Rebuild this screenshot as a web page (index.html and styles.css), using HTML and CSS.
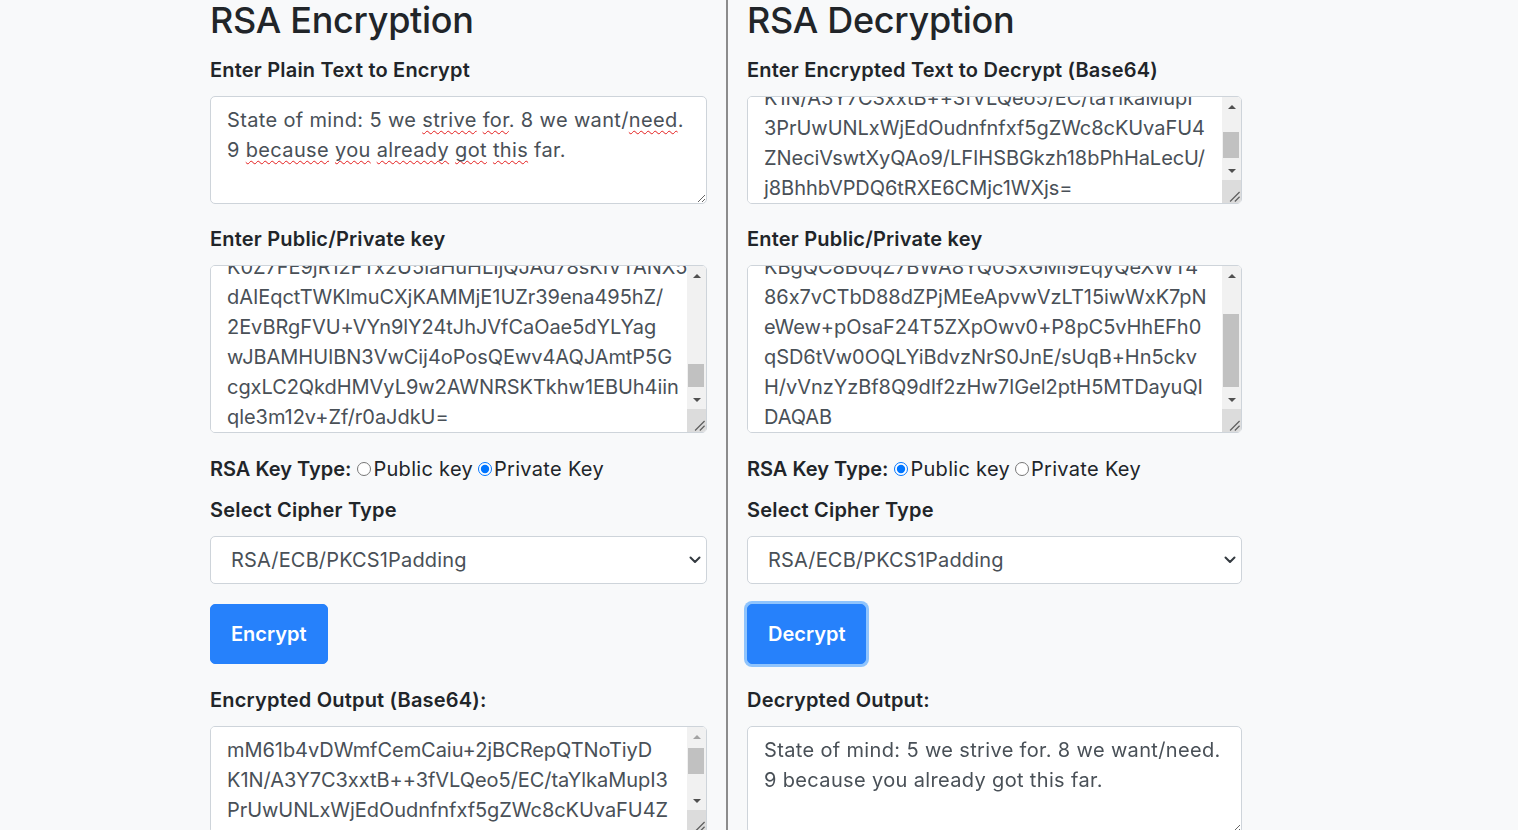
FILE: index.html
```html
<!DOCTYPE html>
<html lang="en">
<head>
<meta charset="utf-8">
<title>RSA Encryption / Decryption</title>
<link rel="stylesheet" href="styles.css">
</head>
<body>
<main class="page">
  <section class="panel panel-left">
    <h1 class="title">RSA Encryption</h1>
    <label class="label">Enter Plain Text to Encrypt</label>
    <div class="ta-wrap">
      <div class="field rows3 fake-ta text" role="textbox" contenteditable="true" spellcheck="false">State of mind: 5 we <span class="sp">strive</span> <span class="sp">for</span>. 8 we want/<span class="sp">need</span>.<br>9 <span class="sp">because</span> <span class="sp">you</span> <span class="sp">already</span> <span class="sp">got</span> <span class="sp">this</span> far.</div>
    </div>

    <label class="label">Enter Public/Private key</label>
    <div class="ta-wrap wrap5">
      <textarea class="field rows5 code" wrap="off" spellcheck="false" data-scroll="bottom">MIICdwIBADANBgkqhkiG9w0BAQEFAASCAmEw
ggJdAgEAAoGBALwHSpnsFYDxhDRLEYwj0SrJ
B5dZPjzrHu8JNsPzx1k+MwR4Cm/BXMtPXmLB
bErqU3lrB7T6k6FobhPlllek7C/T4/KQuW8e
EQWHSpIPq1XDQ5C2IgXb8zatLQmcT+xSoH4f
nlyS/71WfNjMF/xD10h/bMfDsgZ6XZq0fkxM
NrK7kCMBAAECgYAh8n3a7ZHtSAlWdSQ/bH5q
Lr2cVvT0pXz8MkqU4eWn1sYgH3fJ6dA9bCoE
tZ7xRmN2yKpQ5vLw8aFhG3jD1sU0eIcB4nXo
OqV6rTgY9zMkP2bWf7hLd+A3sNcJ5xEuH8iR
QJBAOg7sV2mK9dLx4fP1nTq6ZcYwR3hB5uJe
G8kA0vNyS7pWzX2tDfC4lMqH9bUo1iEjRgK5
xLf3bM8aQnT6yWc1vZpH2sJd7gKuR0oE4tYi
P9mVwB5lNc3qXz8fAeGh1rSj6kUo2DyT7Ib0
CQJBAM/s4nR8yLk2XqWv9hBt1dZgE3oP6fJc
a7VuT0mN5iKe+Qx2wYl8HrDsG4pCb1zFjS9O
h3nLqA6vBtY0cWkM2xRdE7fU8iPsJ4gZo5Ka
DlT9wQe1rXbH6mVc3yN8pS0uGzA2jKi7F4Ls
K0Z7FE9jR12FTx2U5IaHuHLIjQJAd78sKIVTANX5
dAIEqctTWKlmuCXjKAMMjE1UZr39ena495hZ/
2EvBRgFVU+VYn9lY24tJhJVfCaOae5dYLYag
wJBAMHUIBN3VwCij4oPosQEwv4AQJAmtP5G
cgxLC2QkdHMVyL9w2AWNRSKTkhw1EBUh4iin
qle3m12v+Zf/r0aJdkU=</textarea>
      <div class="sbar" aria-hidden="true">
        <div class="sb-btn sb-up"><svg width="8" height="4" viewBox="0 0 8 4"><path d="M0 4 L4 0 L8 4 Z"/></svg></div>
        <div class="sb-track"><div class="sb-thumb"></div></div>
        <div class="sb-btn sb-down"><svg width="8" height="4" viewBox="0 0 8 4"><path d="M0 0 L8 0 L4 4 Z"/></svg></div>
        <div class="sb-corner"><svg width="20" height="20" viewBox="0 0 20 20"><path d="M8.5 19 L18.5 9 M13.5 19 L18.5 14"/></svg></div>
      </div>
    </div>

    <div class="keytype">
      <strong>RSA Key Type:</strong><input type="radio" name="enc-key" id="enc-pub"><label for="enc-pub">Public key</label><input type="radio" name="enc-key" id="enc-priv" checked><label for="enc-priv">Private Key</label>
    </div>

    <label class="label">Select Cipher Type</label>
    <div class="select-wrap">
      <select class="select">
        <option>RSA/ECB/PKCS1Padding</option>
        <option>RSA/ECB/OAEPWithSHA-1AndMGF1Padding</option>
        <option>RSA/ECB/OAEPWithSHA-256AndMGF1Padding</option>
      </select>
      <svg class="chevron" width="12" height="8" viewBox="0 0 12 8" aria-hidden="true"><path d="M1.5 1.5 L6 6 L10.5 1.5" fill="none" stroke="#343a40" stroke-width="2" stroke-linecap="round" stroke-linejoin="round"/></svg>
    </div>

    <button class="btn" type="button">Encrypt</button>

    <label class="label">Encrypted Output (Base64):</label>
    <div class="ta-wrap">
      <textarea class="field rows3 code" wrap="off" spellcheck="false">mM61b4vDWmfCemCaiu+2jBCRepQTNoTiyD
K1N/A3Y7C3xxtB++3fVLQeo5/EC/taYlkaMupI3
PrUwUNLxWjEdOudnfnfxf5gZWc8cKUvaFU4Z
NeciVswtXyQAo9/LFIHSBGkzh18bPhHaLecU/j8
BhhbVPDQ6tRXE6CMjc1WXjs=</textarea>
      <div class="sbar" aria-hidden="true">
        <div class="sb-btn sb-up"><svg width="8" height="4" viewBox="0 0 8 4"><path d="M0 4 L4 0 L8 4 Z"/></svg></div>
        <div class="sb-track"><div class="sb-thumb"></div></div>
        <div class="sb-btn sb-down"><svg width="8" height="4" viewBox="0 0 8 4"><path d="M0 0 L8 0 L4 4 Z"/></svg></div>
        <div class="sb-corner"><svg width="20" height="20" viewBox="0 0 20 20"><path d="M8.5 19 L18.5 9 M13.5 19 L18.5 14"/></svg></div>
      </div>
    </div>
  </section>

  <section class="panel panel-right">
    <h1 class="title">RSA Decryption</h1>
    <label class="label">Enter Encrypted Text to Decrypt (Base64)</label>
    <div class="ta-wrap">
      <textarea class="field rows3 code" wrap="off" spellcheck="false" data-scroll="bottom">mM61b4vDWmfCemCaiu+2jBCRepQTNoTiyD
K1N/A3Y7C3xxtB++3fVLQeo5/EC/taYlkaMupI
3PrUwUNLxWjEdOudnfnfxf5gZWc8cKUvaFU4
ZNeciVswtXyQAo9/LFIHSBGkzh18bPhHaLecU/
j8BhhbVPDQ6tRXE6CMjc1WXjs=</textarea>
      <div class="sbar" aria-hidden="true">
        <div class="sb-btn sb-up"><svg width="8" height="4" viewBox="0 0 8 4"><path d="M0 4 L4 0 L8 4 Z"/></svg></div>
        <div class="sb-track"><div class="sb-thumb"></div></div>
        <div class="sb-btn sb-down"><svg width="8" height="4" viewBox="0 0 8 4"><path d="M0 0 L8 0 L4 4 Z"/></svg></div>
        <div class="sb-corner"><svg width="20" height="20" viewBox="0 0 20 20"><path d="M8.5 19 L18.5 9 M13.5 19 L18.5 14"/></svg></div>
      </div>
    </div>

    <label class="label">Enter Public/Private key</label>
    <div class="ta-wrap wrap5">
      <textarea class="field rows5 code" wrap="off" spellcheck="false" data-scroll="bottom">MIGfMA0GCSqGSIb3DQEBAQUAA4GNADCBiQ
KBgQC8B0qZ7BWA8YQ0SxGMI9EqyQeXWT4
86x7vCTbD88dZPjMEeApvwVzLT15iwWxK7pN
eWew+pOsaF24T5ZXpOwv0+P8pC5vHhEFh0
qSD6tVw0OQLYiBdvzNrS0JnE/sUqB+Hn5ckv
H/vVnzYzBf8Q9dIf2zHw7IGel2ptH5MTDayuQI
DAQAB</textarea>
      <div class="sbar" aria-hidden="true">
        <div class="sb-btn sb-up"><svg width="8" height="4" viewBox="0 0 8 4"><path d="M0 4 L4 0 L8 4 Z"/></svg></div>
        <div class="sb-track"><div class="sb-thumb"></div></div>
        <div class="sb-btn sb-down"><svg width="8" height="4" viewBox="0 0 8 4"><path d="M0 0 L8 0 L4 4 Z"/></svg></div>
        <div class="sb-corner"><svg width="20" height="20" viewBox="0 0 20 20"><path d="M8.5 19 L18.5 9 M13.5 19 L18.5 14"/></svg></div>
      </div>
    </div>

    <div class="keytype">
      <strong>RSA Key Type:</strong><input type="radio" name="dec-key" id="dec-pub" checked><label for="dec-pub">Public key</label><input type="radio" name="dec-key" id="dec-priv"><label for="dec-priv">Private Key</label>
    </div>

    <label class="label">Select Cipher Type</label>
    <div class="select-wrap">
      <select class="select">
        <option>RSA/ECB/PKCS1Padding</option>
        <option>RSA/ECB/OAEPWithSHA-1AndMGF1Padding</option>
        <option>RSA/ECB/OAEPWithSHA-256AndMGF1Padding</option>
      </select>
      <svg class="chevron" width="12" height="8" viewBox="0 0 12 8" aria-hidden="true"><path d="M1.5 1.5 L6 6 L10.5 1.5" fill="none" stroke="#343a40" stroke-width="2" stroke-linecap="round" stroke-linejoin="round"/></svg>
    </div>

    <button class="btn btn-focus" type="button">Decrypt</button>

    <label class="label">Decrypted Output:</label>
    <div class="ta-wrap">
      <textarea class="field rows3 text" wrap="off" spellcheck="false">State of mind: 5 we strive for. 8 we want/need.
9 because you already got this far.</textarea>
    </div>
  </section>
</main>
<script src="script.js"></script>
</body>
</html>
```

FILE: styles.css
```css
* {
  box-sizing: border-box;
}

html,
body {
  margin: 0;
  height: 100%;
}

body {
  background: #f8f9fa;
  color: #212529;
  font-family: Inter, "Noto Sans", sans-serif;
  overflow: hidden;
}

.page {
  display: flex;
  align-items: stretch;
  min-height: 100vh;
  padding-left: 210px;
}

.panel {
  display: flex;
  flex-direction: column;
  align-items: flex-start;
}

.panel-left {
  width: 518px;
  padding-right: 19px;
  border-right: 2px solid #8c8c8c;
}

.panel-right {
  width: 495px;
  margin-left: 19px;
}

.title {
  margin: 0 0 15px;
  font-size: 36px;
  font-weight: 500;
  line-height: 40px;
  letter-spacing: -0.3px;
}

.label {
  display: block;
  margin: 0 0 11px;
  font-size: 20px;
  font-weight: 600;
  line-height: 30px;
  letter-spacing: 0.2px;
}

/* ---------- text areas ---------- */

.ta-wrap {
  position: relative;
  width: 100%;
  flex: none;
  margin: 0 0 20px;
}

.ta-wrap.wrap5 {
  margin-bottom: 21px;
}

.field {
  display: block;
  width: 100%;
  margin: 0;
  padding: 8px 16px;
  font-family: inherit;
  font-size: 20px;
  line-height: 30px;
  color: #495057;
  background: #fff;
  border: 1px solid #ced4da;
  border-radius: 5px;
  resize: vertical;
  overflow-x: hidden;
  overflow-y: auto;
  white-space: pre;
  outline: none;
}

.field.text {
  letter-spacing: 0.35px;
}

.field.code {
  letter-spacing: -0.05px;
  padding-right: 36px;
}

.rows3 {
  height: 108px;
}

.rows5 {
  height: 168px;
}

.fake-ta {
  white-space: normal;
}

.sp {
  text-decoration: underline wavy #e41e1e;
  text-decoration-thickness: 1.4px;
  text-underline-offset: 3px;
  text-decoration-skip-ink: none;
}

/* ---------- drawn scrollbar ---------- */

.sbar {
  position: absolute;
  top: 1px;
  right: 1px;
  bottom: 1px;
  width: 19px;
  display: flex;
  flex-direction: column;
  background: #f1f1f1;
  border-top-right-radius: 4px;
  border-bottom-right-radius: 4px;
  overflow: hidden;
  pointer-events: none;
}

.sb-btn {
  flex: none;
  height: 19px;
  display: flex;
  align-items: center;
  justify-content: center;
}

.sb-btn svg {
  fill: #505050;
}

.sbar.at-top .sb-up svg {
  fill: #a3a3a3;
}

.sb-track {
  position: relative;
  flex: 1;
  margin: 2px 0 3px;
}

.sb-thumb {
  position: absolute;
  left: 1px;
  right: 2px;
  top: 0;
  height: 30px;
  background: #c1c1c1;
}

.sb-corner {
  flex: none;
  height: 23px;
  background: #dcdcdc;
  display: flex;
  align-items: flex-end;
  justify-content: flex-end;
}

.sb-corner svg {
  fill: none;
  stroke: #5f5f5f;
  stroke-width: 1.3;
}

/* ---------- key type radios ---------- */

.keytype {
  margin: 0 0 11px;
  font-size: 20px;
  line-height: 30px;
  white-space: nowrap;
}

.keytype label {
  letter-spacing: 0.3px;
}

.keytype strong {
  font-weight: 600;
}

.keytype input {
  margin: 0 2px 0 6px;
  width: 14px;
  height: 14px;
  vertical-align: 0;
}

.keytype label + input {
  margin-left: 5px;
}

/* ---------- select ---------- */

.select-wrap {
  position: relative;
  width: 100%;
  margin: 0 0 20px;
}

.select {
  display: block;
  width: 100%;
  height: 48px;
  padding: 0 40px 0 20px;
  font-family: inherit;
  font-size: 20px;
  letter-spacing: 0.15px;
  color: #495057;
  background: #fff;
  border: 1px solid #ced4da;
  border-radius: 5px;
  appearance: none;
  -webkit-appearance: none;
  outline: none;
}

.chevron {
  position: absolute;
  right: 6px;
  top: 20px;
  pointer-events: none;
}

/* ---------- buttons ---------- */

.btn {
  height: 60px;
  margin: 0 0 21px;
  padding: 0 20px;
  font-family: inherit;
  font-size: 20px;
  font-weight: 600;
  color: #fff;
  background: #2681fb;
  border: 1px solid #2681fb;
  border-radius: 5px;
  cursor: pointer;
}

.btn-focus {
  box-shadow: 0 0 0 3px rgba(38, 143, 255, 0.5);
}
```

FILE: script.js
```js
document.querySelectorAll('.ta-wrap').forEach(function (wrap) {
  var ta = wrap.querySelector('textarea');
  if (!ta) return;
  if (ta.dataset.scroll === 'bottom') {
    ta.scrollTop = ta.scrollHeight - ta.clientHeight - 8;
  }
  var bar = wrap.querySelector('.sbar');
  if (!bar) return;
  var track = bar.querySelector('.sb-track');
  var thumb = bar.querySelector('.sb-thumb');
  var trackH = track.clientHeight;
  var size = Math.max(20, Math.round(trackH * ta.clientHeight / ta.scrollHeight));
  var max = ta.scrollHeight - ta.clientHeight;
  var pos = max > 0 ? Math.round((trackH - size) * Math.min(1, ta.scrollTop / (max - 8))) : 0;
  thumb.style.height = size + 'px';
  thumb.style.top = pos + 'px';
  if (ta.scrollTop === 0) bar.classList.add('at-top');
});
```
